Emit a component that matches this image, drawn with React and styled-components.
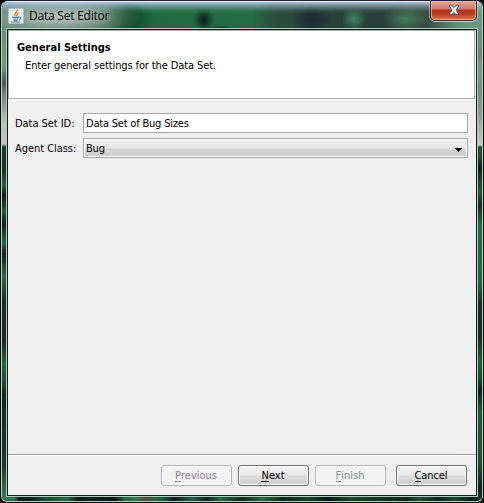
import React from 'react';
import styled, { createGlobalStyle, css } from 'styled-components';

const GlobalStyle = createGlobalStyle`
  * { box-sizing: border-box; }
  body { margin: 0; background: #050b08; overflow: hidden; }
`;

const blob = (x, y, w, h, color) =>
  `radial-gradient(ellipse ${w}px ${h}px at ${x}px ${y}px, ${color} 0%, transparent 100%)`;

const TITLE_GLASS = [
  'linear-gradient(180deg, rgba(184,202,226,.95) 0, rgba(160,190,205,.55) 4px, rgba(120,165,155,.12) 9px, transparent 12px)',
  blob(60, 15, 80, 22, 'rgba(185,192,188,.9)'),
  blob(128, 17, 24, 20, '#0f4b2c'),
  blob(202, 18, 11, 12, '#0c1f1b'),
  blob(219, 27, 14, 4, '#12301f'),
  blob(310, 18, 20, 17, '#1e2530'),
  blob(352, 17, 12, 12, '#3e8763'),
  blob(404, 17, 24, 13, '#467d5e'),
  'linear-gradient(90deg, #5f8978 0, #55786a 70px, #38634f 105px, #175031 125px, #206a41 150px, #246c44 250px, #2b4f41 270px, #28443b 310px, #283e38 385px, #3b4743 425px, #60917a 455px, #6b9a85 484px)',
].join(', ');

const LEFT_GLASS =
  'linear-gradient(180deg, #5f8978 0, #6b9d83 65px, #46584f 82px, #777f7c 93px, #b0c7bb 122px, #c6c2c0 143px, #17382a 146px, #16382a 170px, #206240 184px, #101c1a 194px, #23593b 211px, #141e1b 224px, #226b42 241px, #151d1d 253px, #29694a 275px, #1a302a 300px, #192825 340px, #23653d 362px, #1c5433 380px, #142820 393px, #1e3a2f 465px, #2f6e4e 490px, #347957 503px)';

const RIGHT_GLASS =
  'linear-gradient(180deg, #6b9a85 0, #62907c 45px, #7c7f7e 56px, #6fa086 65px, #6a927d 90px, #8c9692 110px, #c2ccc7 144px, #224c33 146px, #234d36 156px, #141e22 166px, #23583b 190px, #192b29 205px, #246b43 224px, #256342 282px, #182e28 303px, #172c26 336px, #1f6037 360px, #174d2d 377px, #101d1f 389px, #1f5937 410px, #1b5130 463px, #11201f 487px, #173f2d 503px)';

const BOTTOM_GLASS =
  'linear-gradient(90deg, #2c694b 0, #317350 12px, #101f1d 17px, #101c1c 28px, #194b31 42px, #236741 65px, #0d1919 77px, #10231d 88px, #081716 113px, #246b43 123px, #347653 134px, #614942 142px, #246642 153px, #1c6139 160px, #111a20 172px, #225f3b 190px, #101c22 205px, #216b3e 218px, #13271f 241px, #246b3e 261px, #13281f 280px, #154029 306px, #0c1718 325px, #16482a 350px, #123321 380px, #112321 405px, #195331 417px, #102723 435px, #17482c 455px, #0c1919 470px, #123425 484px)';

const Window = styled.main`
  width: 484px;
  height: 503px;
  padding: 0 1px 1px 1px;
  background: #050b09;
  font-family: 'DejaVu Sans Condensed', 'DejaVu Sans', sans-serif;
  font-stretch: condensed;
  font-size: 11px;
  color: #000;
`;

const Glass = styled.div`
  height: 502px;
  padding: 0 4px;
  border: 1px solid #b8d0c4;
  border-top: 1px solid #1d1f2d;
  border-radius: 7px 7px 6px 6px;
  background: ${BOTTOM_GLASS};
  overflow: hidden;
  position: relative;
`;

const Backdrop = styled.div`
  position: absolute;
  inset: 0;
  background: ${({ $paint }) => $paint};
  ${({ $side }) => $side === 'left' && css`right: auto; width: 5px;`}
  ${({ $side }) => $side === 'right' && css`left: auto; width: 5px;`}
  ${({ $side }) => $side === 'top' && css`bottom: auto; height: 29px; border-top: 1px solid #eaf1f9;`}
`;

const TitleBar = styled.header`
  position: relative;
  height: 27px;
  display: flex;
  align-items: flex-start;
  padding: 0 1px 0 2px;
`;

const Title = styled.h1`
  margin: 6px auto 0 5px;
  font: 400 12px/18px 'Open Sans', 'Noto Sans', sans-serif;
  letter-spacing: -0.22px;
  white-space: nowrap;
  text-shadow: 0 0 7px rgba(255, 255, 255, .65), 0 0 9px rgba(255, 255, 255, .4);
`;

const AppIcon = styled.svg`
  display: block;
  margin-top: 7px;
`;

const CloseButton = styled.button`
  width: 47px;
  height: 20px;
  padding: 0;
  display: flex;
  justify-content: center;
  align-items: center;
  border: 1px solid #45201f;
  border-top: 0;
  border-radius: 0 0 5px 5px;
  box-shadow: inset 0 0 0 1px rgba(255, 205, 190, .6), 0 1px 0 rgba(225, 240, 235, .75), 1px 0 0 rgba(225, 240, 235, .5), -1px 0 0 rgba(225, 240, 235, .5);
  background: linear-gradient(180deg, #e6a797 0, #d17c69 8px, #b83419 9px, #b83a1f 13px, #df7750 19px);
`;

const CloseGlyph = styled.svg`
  display: block;
  margin-bottom: 1px;
`;

const Client = styled.section`
  position: relative;
  height: 469px;
  border: 1px solid #b5cbbf;
  background: #efefef;
  box-shadow: inset 0 0 0 1px #111d18;
  padding: 1px;
  display: flex;
  flex-direction: column;
`;

const Banner = styled.div`
  height: 69px;
  margin-right: 1px;
  padding: 10px 0 0 8px;
  background: #fff;
  border: 1px solid #acacac;
  box-shadow: 1px 1px 0 #fff;
`;

const Heading = styled.h2`
  margin: 0;
  font-size: 11px;
  line-height: 14px;
  font-weight: 700;
`;

const Caption = styled.p`
  margin: 4px 0 0 8px;
  line-height: 14px;
  letter-spacing: -0.11px;
`;

const Form = styled.div`
  flex: 1;
  display: grid;
  grid-template-columns: 68px 385px;
  grid-auto-rows: 20px;
  row-gap: 5px;
  padding: 14px 0 0 7px;
`;

const Label = styled.label`
  padding-top: 1px;
  line-height: 20px;
  white-space: nowrap;
  letter-spacing: -0.05px;
`;

const Field = styled.div`
  height: 20px;
  padding: 1px 0 0 2px;
  line-height: 18px;
  letter-spacing: -0.2px;
  border: 1px solid #a5a6a9;
  background: #fff;
`;

const Select = styled(Field)`
  display: flex;
  justify-content: space-between;
  align-items: center;
  padding-right: 5px;
  box-shadow: inset 0 0 0 1px #f9f9f9;
  background: linear-gradient(180deg, #f2f2f2 0, #e7e7e7 9px, #d5d5d5 10px, #cccccc 18px);
`;

const Arrow = styled.svg`
  margin-top: 2px;
`;

const Footer = styled.footer`
  height: 41px;
  display: flex;
  align-items: flex-start;
  justify-content: flex-end;
  gap: 6px;
  padding: 10px 9px 0 0;
  border-top: 1px solid #9b9b9b;
  box-shadow: inset 0 1px 0 #fff;
`;

const Button = styled.button`
  width: 71px;
  height: 21px;
  padding: 0 1px 0 0;
  font: inherit;
  line-height: 19px;
  color: #000;
  border: 1px solid #707070;
  border-radius: 3px;
  box-shadow: inset 0 0 0 1px #fafafa;
  background: linear-gradient(180deg, #f2f2f2 0, #ebebeb 9px, #dcdcdc 10px, #cfcfcf 19px);
  &:disabled { color: ${({ $tint }) => $tint || '#8a8a8a'}; border-color: #b2b6b5; background: #f2f2f2; }
  &:last-child { margin-left: 4px; letter-spacing: -0.1px; }
`;

const Mnemonic = styled.span`
  display: inline-block;
  height: 13px;
  line-height: 13px;
  border-bottom: 1px solid currentColor;
`;

const actions = [
  { text: 'Previous', disabled: true, tint: '#8f7f92' },
  { text: 'Next' },
  { text: 'Finish', disabled: true, tint: '#7f9284' },
  { text: 'Cancel' },
];

export default function App() {
  return (
    <Window>
      <GlobalStyle />
      <Glass>
        <Backdrop $side="left" $paint={LEFT_GLASS} />
        <Backdrop $side="right" $paint={RIGHT_GLASS} />
        <Backdrop $side="top" $paint={TITLE_GLASS} />
        <TitleBar>
          <AppIcon width="16" height="16" viewBox="0 0 16 16">
            <rect x=".5" y=".5" width="15" height="15" rx="1" fill="#e6edf2" stroke="#aebfcb" />
            <path d="M9.3 1.5C10 4 5.4 5 7.2 8M10.6 4.5C7.8 6 9.8 6.8 8.6 8.3" fill="none" stroke="#ee7c20" strokeWidth="1.4" />
            <path d="M4 9.3h7M5 11h5M5.5 12.6h4M3 14h9M11 9c2.5-.2 1.8 2 .2 2.4" fill="none" stroke="#56809e" strokeWidth="1.2" />
          </AppIcon>
          <Title>Data Set Editor</Title>
          <CloseButton aria-label="Close">
            <CloseGlyph width="12" height="10" viewBox="0 0 12 10">
              <path d="M1 .7h3.3L6 2.6 7.7.7H11L8 5l3 4.3H7.7L6 7.4 4.3 9.3H1L4 5z" fill="#f5f5f5" stroke="#505868" />
            </CloseGlyph>
          </CloseButton>
        </TitleBar>
        <Client>
          <Banner>
            <Heading>General Settings</Heading>
            <Caption>Enter general settings for the Data Set.</Caption>
          </Banner>
          <Form>
            <Label>Data Set ID:</Label>
            <Field>Data Set of Bug Sizes</Field>
            <Label>Agent Class:</Label>
            <Select>
              Bug
              <Arrow width="7" height="4" viewBox="0 0 7 4" shapeRendering="crispEdges"><path d="M0 0h7v1H6v1H5v1H4v1H3V3H2V2H1V1H0z" /></Arrow>
            </Select>
          </Form>
          <Footer>
            {actions.map(({ text, disabled, tint }) => (
              <Button key={text} disabled={disabled} $tint={tint}><Mnemonic>{text[0]}</Mnemonic>{text.slice(1)}</Button>
            ))}
          </Footer>
        </Client>
      </Glass>
    </Window>
  );
}
